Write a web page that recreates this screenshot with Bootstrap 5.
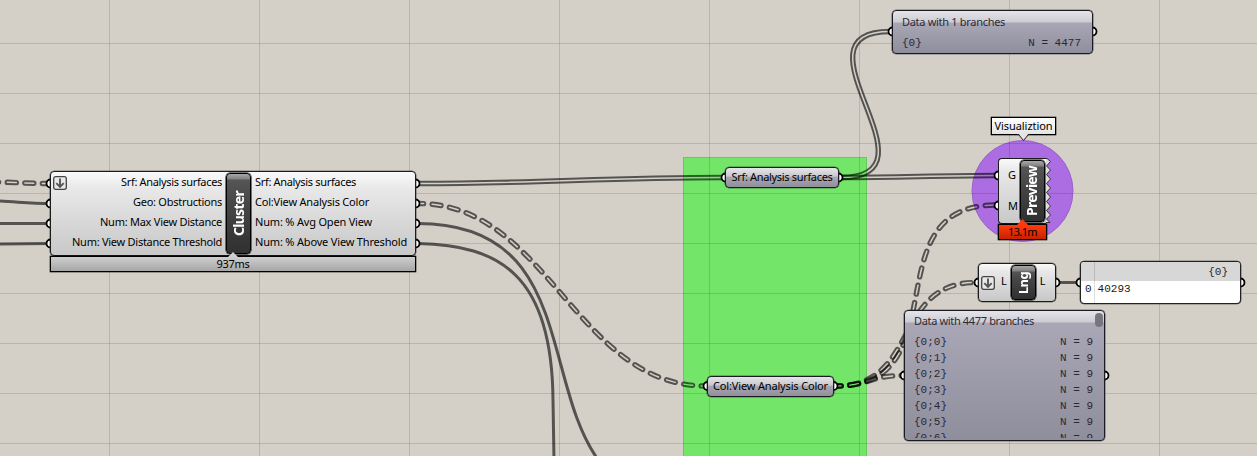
<!DOCTYPE html>
<html lang="en">
<head>
<meta charset="utf-8">
<title>Node canvas</title>
<link href="https://cdn.jsdelivr.net/npm/bootstrap@5.3.0/dist/css/bootstrap.min.css" rel="stylesheet">
<style>
body{margin:0;overflow:hidden;font-family:"Noto Sans","Open Sans",sans-serif;font-size:11px;line-height:20px;color:#000}
.canvas{width:1257px;height:456px;background-color:#d4d0c8}
.wires{left:0;top:0}
.node{border:1px solid #1c1c1c;border-radius:4px;padding:0 1px;background:linear-gradient(#fafafa,#e8e8e8 20%,#c8c8c8);white-space:nowrap;box-shadow:0 0 0 .3px #1c1c1c}
.slate{border:1px solid #1c1a22;border-radius:4px;padding:0 1px;background:linear-gradient(#e4e4ea,#ccccd3 11px,#a9a7b5 12px,#8f8e9c);box-shadow:0 0 0 .3px #1c1a22}
.pill{background:linear-gradient(#e6e6ea,#c8c8ce 42%,#a6a5b0 50%,#908f9b);line-height:17px}
.plate{border:1px solid #000;border-radius:4px;background:linear-gradient(#a8a8a8,#808080 5px,#555 6px,#464646 40%,#303030);color:#fff;font-weight:700;box-shadow:0 0 0 .5px #000}
.plate span{writing-mode:vertical-rl;transform:rotate(180deg)}
.tag{border:1px solid #000;line-height:13px;text-align:center;box-shadow:0 0 0 .3px #000}
.mono{font-family:"Liberation Mono",monospace;font-size:11px;line-height:16px;color:#2a2834}
.mono span{white-space:pre}
.sub{color:#2c2a34}
.down{width:14px;height:14px}
</style>
</head>
<body>
<main class="canvas position-relative overflow-hidden">
<svg class="wires position-absolute" width="1257" height="456" fill="none">
 <defs>
  <pattern id="grid" x="109" y="43" width="150" height="50" patternUnits="userSpaceOnUse"><path d="M0 .5H150M.5 0V50" stroke="#000" stroke-opacity=".13"/></pattern>
  <path id="w1" d="M418 183.5C540 183.5 602 177.5 724 177.5"/>
  <path id="w2" d="M841 177.5C900 177.5 937 175.5 996 175.5"/>
  <path id="w3" d="M841 177.5C946 177.5 785 31.5 890 31.5"/>
  <path id="d0" d="M-10.5 182C10 182 30 183.5 50 183.5"/>
  <path id="d1" d="M414.5 203.5H418C548 203.5 576 386 706 386"/>
  <path id="d2" d="M832 386H836C962 386 870 205 996 205"/>
  <path id="d3" d="M832 386H836C920 386 892 282.5 976 282.5"/>
  <path id="d4" d="M832 386H836C870 386 869 375.5 903 375.5"/>
 </defs>
 <rect x="683.5" y="157.5" width="183" height="310" fill="#73e669" stroke="#65c95b"/>
 <circle cx="1022.5" cy="191" r="50.5" fill="#ac6ce2" stroke="#9a62c8"/>
 <rect width="1257" height="456" fill="url(#grid)"/>
 <g id="wirelayer" stroke="#000" stroke-opacity=".6"></g>
 <g stroke="#000" stroke-opacity=".6" stroke-width="3">
  <path d="M0 201C20 202 30 203.5 50 203.5M0 223.5H50M0 244L50 243.5"/>
  <path d="M418 223.5C628 223.5 494 507 704 507"/>
  <path d="M418 243.5C500 245 552 275 553 400L554 460"/>
  <path d="M1057 282.5H1079"/>
 </g>
 <g fill="#fff" stroke="#000" stroke-width="1.8">
  <circle cx="50.5" cy="183.5" r="4"/><circle cx="50.5" cy="203.5" r="4"/><circle cx="50.5" cy="223.5" r="4"/><circle cx="50.5" cy="243.5" r="4"/>
  <circle cx="415.5" cy="183.5" r="4"/><circle cx="415.5" cy="203.5" r="4"/><circle cx="415.5" cy="223.5" r="4"/><circle cx="415.5" cy="243.5" r="4"/>
  <circle cx="725.5" cy="177.5" r="4"/><circle cx="838.5" cy="177.5" r="4"/><circle cx="707.5" cy="386" r="4"/><circle cx="833.5" cy="386" r="4"/>
  <circle cx="892.5" cy="31.5" r="4"/><circle cx="1092.5" cy="31.5" r="4"/><circle cx="998.5" cy="175.5" r="4"/><circle cx="998.5" cy="205.5" r="4"/>
  <circle cx="978.5" cy="282.5" r="4"/><circle cx="1055.5" cy="282.5" r="4"/><circle cx="1080.5" cy="282.5" r="4"/><circle cx="1240.5" cy="282.5" r="4"/>
  <circle cx="904.5" cy="375.5" r="4"/><circle cx="1104.5" cy="375.5" r="4"/>
 </g>
 <path d="M1040 158.500H1047L1050.500 161.500L1046.500 166L1050.500 170L1046.500 174.500L1050.500 179L1046.500 183.500L1050.500 188L1046.500 192.500L1050.500 197L1046.500 201.500L1050.500 206L1046.500 210.500L1050.500 215L1046.500 219L1050 222.500H1040Z" fill="#dedede" stroke="#333"/>
</svg>

<section class="node position-absolute d-flex" style="left:50px;top:171px;width:366px;height:85px">
 <svg class="down position-absolute" style="left:2px;top:4px" viewBox="0 0 14 14"><rect x=".7" y=".7" width="12.600" height="12.600" rx="2" fill="#e8e8e8" stroke="#444" stroke-width="1.300"/><path d="M7 2.500V11M3.300 7.200L7 11L10.700 7.200" fill="none" stroke="#555" stroke-width="1.900"/></svg>
 <div class="text-end" style="width:170px"><div data-w="101">Srf: Analysis surfaces</div><div data-w="89">Geo: Obstructions</div><div data-w="122">Num: Max View Distance</div><div data-w="150">Num: View Distance Threshold</div></div>
 <div class="plate d-flex align-items-center justify-content-center" style="width:25px;height:81px;margin:1px 0 0 4px"><span style="font-size:14px" data-h="45">Cluster</span></div>
 <div style="margin-left:4px"><div data-w="101">Srf: Analysis surfaces</div><div data-w="114">Col:View Analysis Color</div><div data-w="117">Num: % Avg Open View</div><div data-w="152">Num: % Above View Threshold</div></div>
</section>
<div class="tag position-absolute" style="left:50px;top:256px;width:366px;height:16px;background:linear-gradient(#cecece,#a6a6a6)"><span data-w="33">937ms</span></div>
<svg class="position-absolute" style="left:227px;top:251px" width="12" height="7"><path d="M0 7L6 1L12 7Z" fill="#cecece"/></svg>

<div class="node slate pill position-absolute text-center" style="left:725px;top:167px;width:114px;height:21px"><span data-w="101">Srf: Analysis surfaces</span></div>
<div class="node slate pill position-absolute text-center" style="left:707px;top:376px;width:127px;height:21px"><span data-w="115">Col:View Analysis Color</span></div>

<section class="slate sub position-absolute" style="left:892px;top:10px;width:201px;height:44px">
 <div style="padding:1px 0 0 8px"><span data-w="103">Data with 1 branches</span></div>
 <div class="mono d-flex justify-content-between" style="padding:3px 10px 0 8px"><span>{0}</span><span>N = 4477</span></div>
</section>

<div class="tag position-absolute" style="left:991px;top:117px;width:65px;height:18px;line-height:15px;background:linear-gradient(#fff,#e4e4e4)"><span data-w="58">Visualiztion</span></div>
<svg class="position-absolute" style="left:1016px;top:133px" width="15" height="9"><path d="M2 0L7.500 7L13 0" fill="#e4e4e4"/><path d="M1 1.500H2.500L7.500 7.500L12.500 1.500H14" fill="none" stroke="#222"/></svg>
<section class="node position-absolute border-end-0 rounded-end-0" style="left:998px;top:158px;width:48px;height:66px;box-shadow:none">
 <div class="d-flex flex-column" style="padding-left:8px;line-height:31px"><span>G</span><span>M</span></div>
</section>
<div class="plate position-absolute d-flex align-items-center justify-content-center" style="left:1020px;top:160px;width:25px;height:62px"><span style="font-size:14px;margin-right:2px" data-h="50">Preview</span></div>
<div class="tag position-absolute" style="left:998px;top:224px;width:49px;height:16px;background:linear-gradient(#ff3c0c,#c82000)"><span data-w="29">13.1m</span></div>
<svg class="position-absolute" style="left:1016px;top:219px" width="13" height="7"><path d="M0 7L6.500 0L13 7Z" fill="#ff3808"/></svg>

<section class="node position-absolute d-flex align-items-center" style="left:978px;top:263px;width:78px;height:39px">
 <svg class="down" style="margin-left:1px" viewBox="0 0 14 14"><rect x=".7" y=".7" width="12.600" height="12.600" rx="2" fill="#e8e8e8" stroke="#444" stroke-width="1.300"/><path d="M7 2.500V11M3.300 7.200L7 11L10.700 7.200" fill="none" stroke="#555" stroke-width="1.900"/></svg>
 <span style="margin:-3px 0 0 6px">L</span>
 <div class="plate d-flex align-items-center justify-content-center" style="width:25px;height:35px;margin-left:4px"><span style="font-size:13px" data-h="22">Lng</span></div>
 <span style="margin:-3px 0 0 4px">L</span>
</section>

<section class="position-absolute bg-white overflow-hidden" style="left:1080px;top:261px;width:161px;height:43px;border:1px solid #222;border-radius:4px;box-shadow:0 0 0 .3px #222">
 <div class="mono text-end" style="background:#d7d7d7;height:19px;line-height:21px;padding-right:12px">{0}</div>
 <div class="mono" style="padding-left:4px;line-height:17px;color:#1a1a1a">0<span style="margin-left:6px">40293</span></div>
 <div class="position-absolute" style="left:13px;top:0;width:1px;height:41px;background:#00000022"></div>
</section>

<section class="slate sub position-absolute overflow-hidden" style="left:904px;top:310px;width:201px;height:131px">
 <div style="padding-left:8px"><span data-w="120">Data with 4477 branches</span></div>
 <div class="mono overflow-hidden" style="height:107px;padding:3px 10px 0 8px">
  <div class="d-flex justify-content-between"><span>{0;0}</span><span>N = 9</span></div>
  <div class="d-flex justify-content-between"><span>{0;1}</span><span>N = 9</span></div>
  <div class="d-flex justify-content-between"><span>{0;2}</span><span>N = 9</span></div>
  <div class="d-flex justify-content-between"><span>{0;3}</span><span>N = 9</span></div>
  <div class="d-flex justify-content-between"><span>{0;4}</span><span>N = 9</span></div>
  <div class="d-flex justify-content-between"><span>{0;5}</span><span>N = 9</span></div>
  <div class="d-flex justify-content-between"><span>{0;6}</span><span>N = 9</span></div>
 </div>
 <div class="position-absolute rounded-pill" style="right:1px;top:2px;width:8px;height:14px;background:#77767c"></div>
</section>
</main>
<script src="https://cdn.jsdelivr.net/npm/bootstrap@5.3.0/dist/js/bootstrap.bundle.min.js"></script>
<script>
// Hollow wires: a wide stroke with its core masked out, dashed for tree data.
document.getElementById('wirelayer').innerHTML = ['w1','w2','w3','d0','d1','d2','d3','d4'].map(id => {
  const dash = id[0] === 'd' ? 'stroke-linecap="round" stroke-dasharray="9 8.6"' : '';
  return `<mask id="m-${id}" maskUnits="userSpaceOnUse" x="0" y="0" width="1257" height="456"><rect width="1257" height="456" fill="#fff" stroke="none"/><use href="#${id}" stroke="#000" stroke-opacity="1" stroke-width="1.5" ${dash}/></mask><g mask="url(#m-${id})"><use href="#${id}" stroke-width="5.4" ${dash}/></g>`;
}).join('');
// Fit each label to its slot by letter spacing.
document.querySelectorAll('[data-w],[data-h]').forEach(el => {
  const r = document.createRange(); r.selectNodeContents(el);
  const b = r.getBoundingClientRect(), v = el.dataset.h;
  el.style.letterSpacing = ((v ? v - b.height : el.dataset.w - b.width) / el.textContent.length) + 'px';
});
</script>
</body>
</html>
